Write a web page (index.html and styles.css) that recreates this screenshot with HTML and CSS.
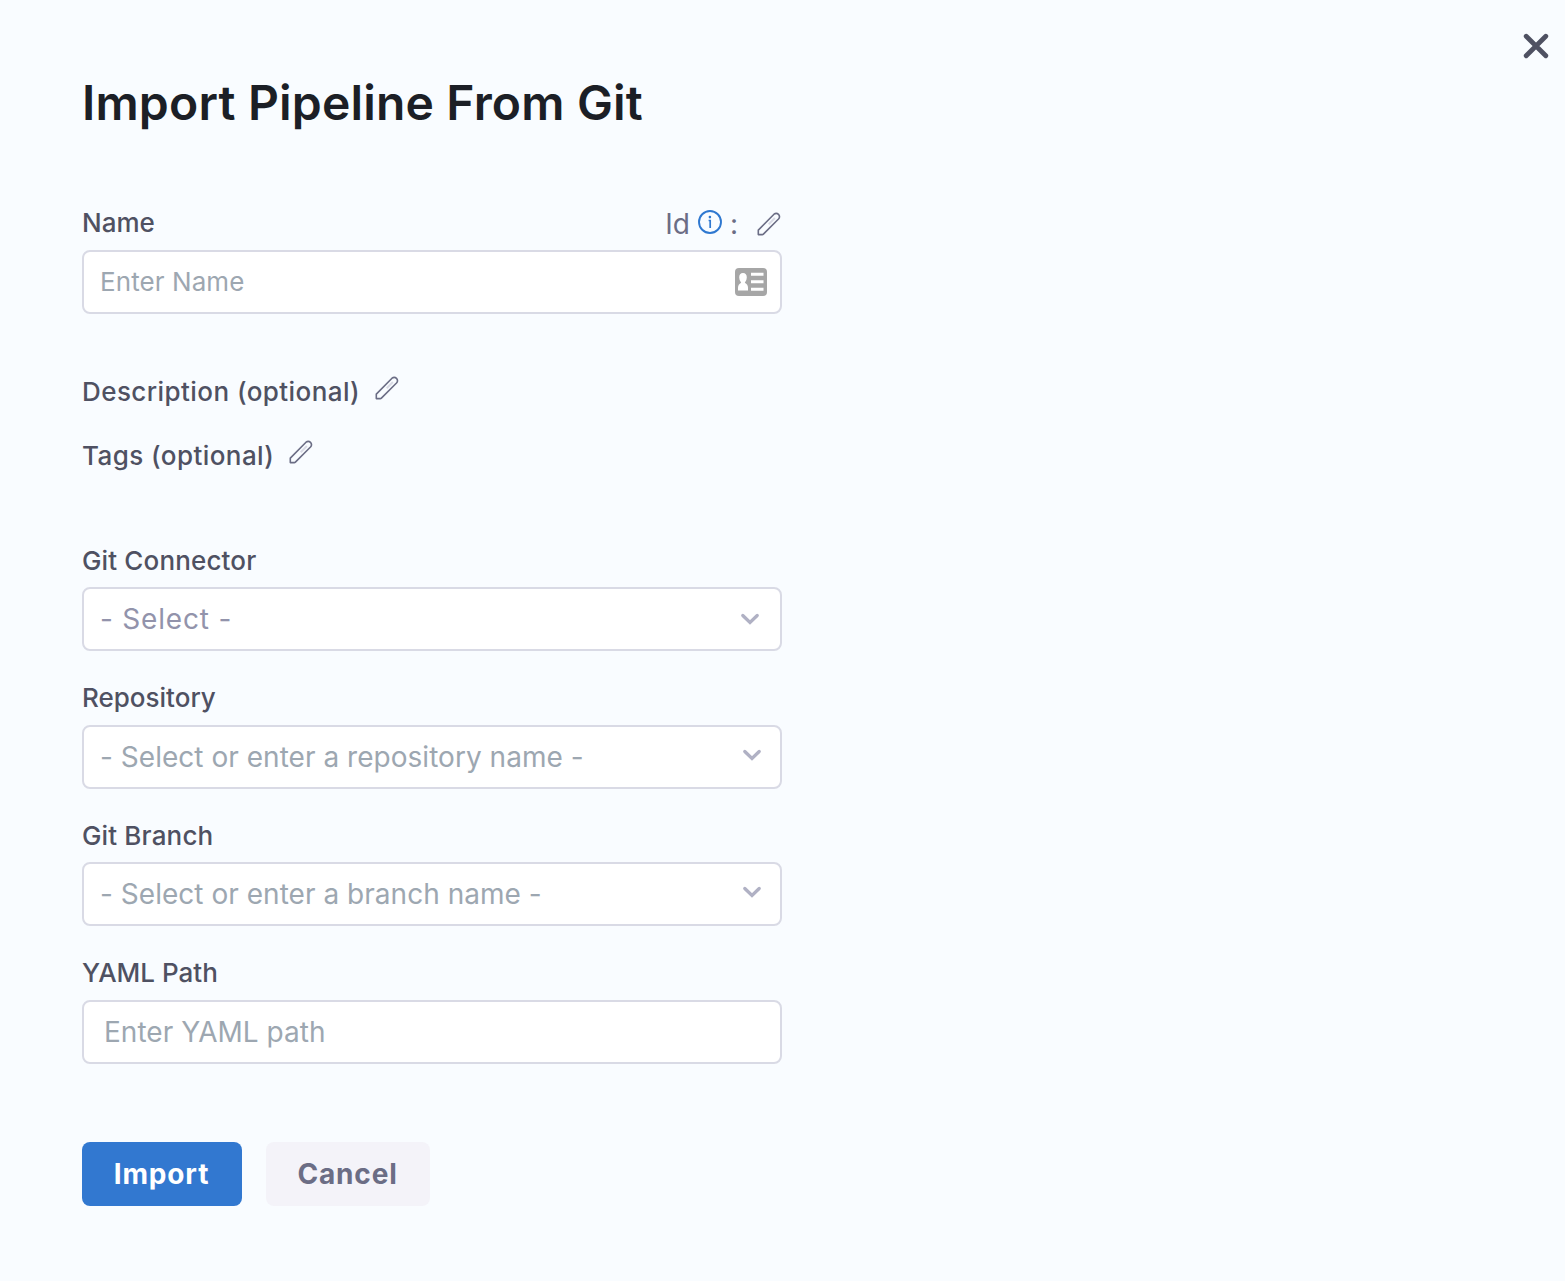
FILE: index.html
```html
<!DOCTYPE html>
<html lang="en">
<head>
<meta charset="utf-8">
<title>Import Pipeline From Git</title>
<link rel="stylesheet" href="styles.css">
</head>
<body>
<svg class="symbols" aria-hidden="true">
  <symbol id="pencil" viewBox="0 0 24 24">
    <path d="M11 11.500 17.200 5.300l1.400 1.400-6.200 6.200z" fill="#d9dae5"/>
    <path d="M1.300 22.600v-4.500L17 2.200q2.400-1.800 4.500.2 2 2.200 0 4.600L6.400 22.100q-.5.500-1.100.5z" fill="none" stroke="#6b6d85" stroke-width="1.600" stroke-linejoin="round"/>
  </symbol>
  <symbol id="chevron" viewBox="0 0 20 12">
    <path d="M2.800 2.500 10 9.500l7.200-7" fill="none" stroke="#b0b1c4" stroke-width="3.300" stroke-linecap="round"/>
  </symbol>
</svg>
<main class="dialog">
  <button class="close" type="button" aria-label="Close">
    <svg width="26" height="26" viewBox="0 0 26 26"><path d="M3.200 3.200l19.600 19.600M22.800 3.200 3.200 22.800" fill="none" stroke="#4f5162" stroke-width="4.800" stroke-linecap="round"/></svg>
  </button>
  <h1 class="title">Import Pipeline From Git</h1>
  <form class="form">
    <div class="field name">
      <div class="label-row">
        <label class="label" for="name">Name</label>
        <div class="id">
          <span class="id-text">Id</span>
          <svg class="info" width="24" height="24" viewBox="0 0 24 24"><circle cx="12" cy="12" r="11" fill="none" stroke="#2f78d0" stroke-width="1.900"/><path d="M10.600 10.500h1.600v7.500" fill="none" stroke="#2f78d0" stroke-width="1.700"/><circle cx="11.900" cy="7.100" r="1.300" fill="#2f78d0"/></svg>
          <span class="id-text colon">:</span>
          <svg class="id-edit" width="24" height="24"><use href="#pencil"/></svg>
        </div>
      </div>
      <div class="control">
        <input class="input small" id="name" placeholder="Enter Name">
        <svg class="card" width="32" height="28" viewBox="0 0 32 28"><rect width="32" height="28" rx="4" fill="#a6a6a6"/><path d="M3 22.500v-2.700q0-3.500 3.200-5.100Q4.200 12.600 4.200 9.500 4.200 5 8 5t3.800 4.500q0 3.100-2 5.200 3.200 1.600 3.200 5.100v2.700z" fill="#fff"/><path d="M16 6.300h12.500M16 13.700h12.500M16 21.300h12.500" stroke="#fff" stroke-width="3"/></svg>
      </div>
    </div>
    <div class="optional">
      <span class="label spaced">Description (optional)</span>
      <svg class="edit" width="24" height="24"><use href="#pencil"/></svg>
    </div>
    <div class="optional tags">
      <span class="label spaced">Tags (optional)</span>
      <svg class="edit" width="24" height="24"><use href="#pencil"/></svg>
    </div>
    <div class="field connector">
      <span class="label git">Git Connector</span>
      <div class="control select">
        <span class="value">- Select -</span>
        <svg class="arrow" width="20" height="12"><use href="#chevron"/></svg>
      </div>
    </div>
    <div class="field">
      <label class="label" for="repo">Repository</label>
      <div class="control">
        <input class="input" id="repo" placeholder="- Select or enter a repository name -">
        <svg class="arrow raised" width="20" height="12"><use href="#chevron"/></svg>
      </div>
    </div>
    <div class="field branch">
      <label class="label git" for="branch">Git Branch</label>
      <div class="control">
        <input class="input" id="branch" placeholder="- Select or enter a branch name -">
        <svg class="arrow raised" width="20" height="12"><use href="#chevron"/></svg>
      </div>
    </div>
    <div class="field">
      <label class="label" for="path">YAML Path</label>
      <div class="control path">
        <input class="input" id="path" placeholder="Enter YAML path">
      </div>
    </div>
    <div class="actions">
      <button class="button primary" type="button">Import</button>
      <button class="button secondary" type="button">Cancel</button>
    </div>
  </form>
</main>
</body>
</html>
```
FILE: styles.css
```css
* { box-sizing: border-box; }
body {
  margin: 0;
  background: #f9fcff;
  color: #4f5162;
  font-family: Inter, sans-serif;
}
svg { display: block; flex: none; }
.symbols { position: absolute; width: 0; height: 0; }
.dialog { position: relative; min-height: 1281px; padding: 73px 82px 0; }
.close {
  position: absolute;
  top: 33px;
  right: 16px;
  padding: 0;
  border: 0;
  background: none;
}
.title {
  margin: 0 0 70px;
  color: #1c1f26;
  font-size: 48px;
  font-weight: 620;
  line-height: 60px;
  letter-spacing: 0.18px;
  white-space: nowrap;
}
.form { width: 700px; }
.field { display: flex; flex-direction: column; gap: 7px; margin-bottom: 27px; }
.field.name { margin-bottom: 58px; }
.field.connector { gap: 6px; }
.field.branch { gap: 6px; }
.label-row { display: flex; justify-content: space-between; }
.label { font-size: 26px; font-weight: 500; line-height: 40px; white-space: nowrap; }
.label.spaced { letter-spacing: 0.43px; }
.label.git { letter-spacing: 0.15px; }
.id { display: flex; color: #6b6d85; }
.id-text { font-size: 28px; line-height: 42px; height: 40px; }
.info { margin: 7px 8px 0 8px; }
.id-edit { margin: 9px 1px 0 19px; }
.control {
  display: flex;
  align-items: center;
  height: 64px;
  padding: 0 13px 0 16px;
  border: 2px solid #d9dae5;
  border-radius: 8px;
  background: #fff;
}
.control.path { padding-left: 20px; }
.input {
  flex: 1;
  min-width: 0;
  padding: 0;
  border: 0;
  outline: 0;
  background: transparent;
  font: 400 28px/34px Inter, sans-serif;
  letter-spacing: 0.03px;
}
.input.small { font-size: 26px; letter-spacing: 0.08px; }
.input::placeholder { color: #9da7b1; opacity: 1; }
.select { justify-content: space-between; }
.value { color: #9293ab; font-size: 28px; line-height: 34px; letter-spacing: 0.8px; }
.arrow { margin-right: 5px; }
.select .arrow { margin-right: 7px; }
.arrow.raised { margin-bottom: 4px; }
.optional { display: flex; gap: 15px; height: 40px; margin-bottom: 24px; }
.optional.tags { margin-bottom: 65px; }
.edit { margin-top: 4px; }
.actions { display: flex; gap: 24px; margin-top: 78px; }
.button {
  height: 64px;
  padding: 0 1px 0 0;
  border: 0;
  border-radius: 8px;
  font: 700 28px/34px Inter, sans-serif;
  letter-spacing: 0.85px;
}
.primary { width: 160px; background: #3278d0; color: #fff; }
.secondary { width: 164px; background: #f4f3f9; color: #6b6d85; }
```
